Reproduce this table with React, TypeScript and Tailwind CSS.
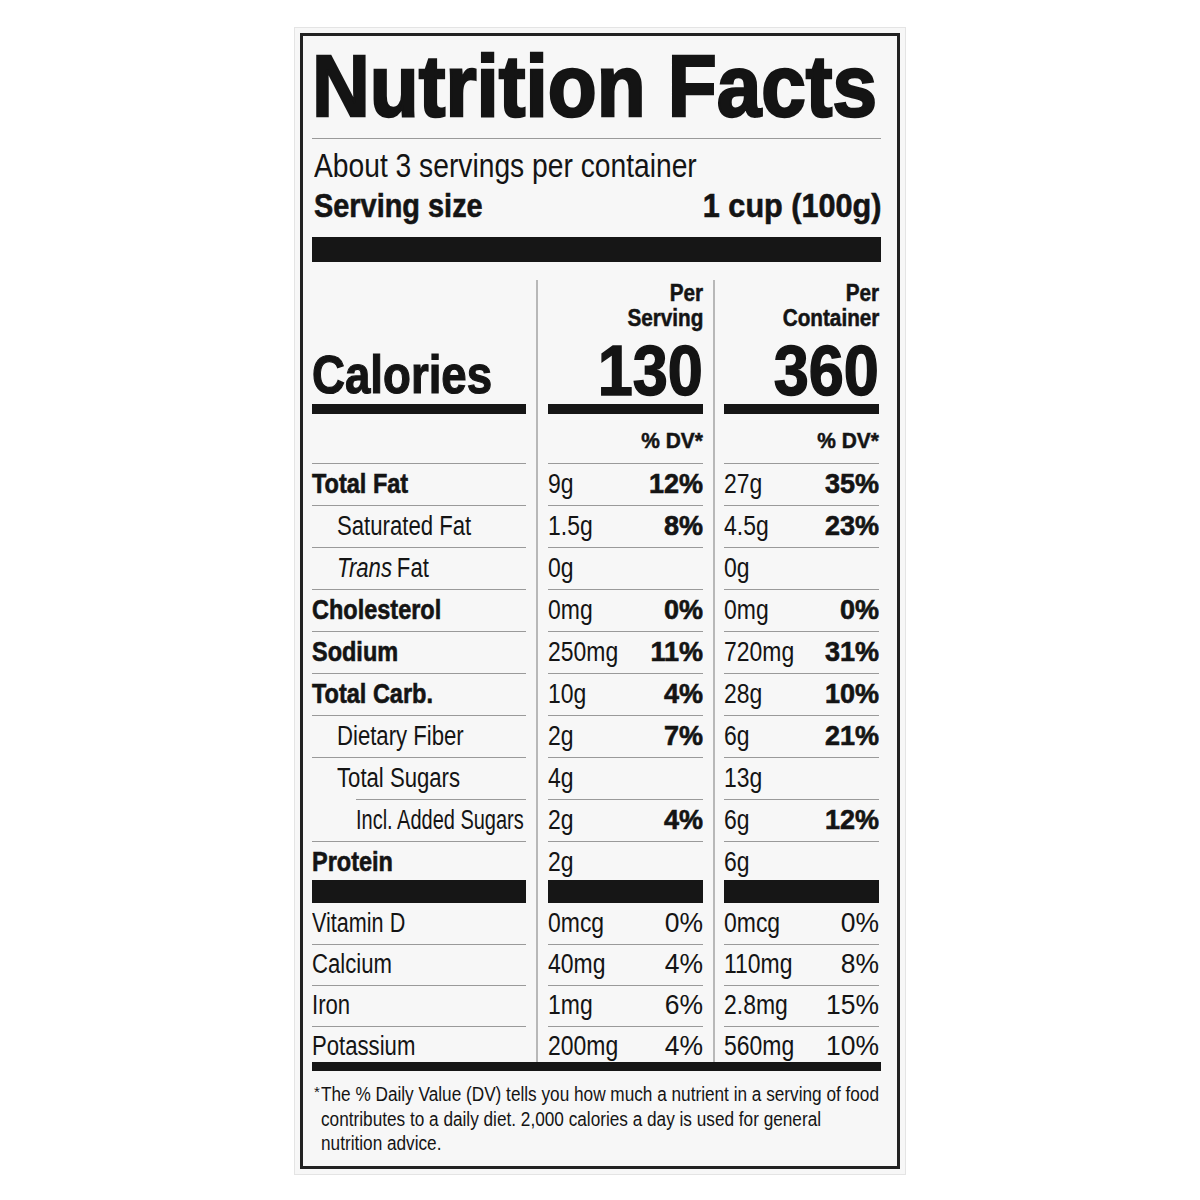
import type { ReactNode } from "react";
import clsx from "clsx";

type Nutrient = {
  label: string;
  bold?: boolean;
  indent?: 0 | 1 | 2;
  italicPrefix?: string;
  serving: [string, string];
  container: [string, string];
  lineIndent?: boolean;
  last?: boolean;
  sx?: string;
};

const MACROS: Nutrient[] = [
  { label: "Total Fat", bold: true, serving: ["9g", "12%"], container: ["27g", "35%"] },
  { label: "Saturated Fat", indent: 1, serving: ["1.5g", "8%"], container: ["4.5g", "23%"] },
  { label: "Fat", italicPrefix: "Trans", indent: 1, serving: ["0g", ""], container: ["0g", ""] },
  { label: "Cholesterol", bold: true, serving: ["0mg", "0%"], container: ["0mg", "0%"] },
  { label: "Sodium", bold: true, serving: ["250mg", "11%"], container: ["720mg", "31%"] },
  { label: "Total Carb.", bold: true, serving: ["10g", "4%"], container: ["28g", "10%"] },
  { label: "Dietary Fiber", indent: 1, serving: ["2g", "7%"], container: ["6g", "21%"] },
  { label: "Total Sugars", indent: 1, serving: ["4g", ""], container: ["13g", ""], lineIndent: true },
  {
    label: "Incl. Added Sugars",
    indent: 2,
    serving: ["2g", "4%"],
    container: ["6g", "12%"],
    sx: "scale-x-[0.74]",
  },
  { label: "Protein", bold: true, serving: ["2g", ""], container: ["6g", ""], last: true },
];

const MINERALS: Nutrient[] = [
  { label: "Vitamin D", serving: ["0mcg", "0%"], container: ["0mcg", "0%"], sx: "scale-x-[0.8]" },
  { label: "Calcium", serving: ["40mg", "4%"], container: ["110mg", "8%"] },
  { label: "Iron", serving: ["1mg", "6%"], container: ["2.8mg", "15%"] },
  { label: "Potassium", serving: ["200mg", "4%"], container: ["560mg", "10%"], last: true },
];

// condensed text: Liberation Sans squeezed to a Helvetica Condensed width
function Sx({ children, className }: { children: ReactNode; className?: string }) {
  return <span className={clsx("inline-block whitespace-nowrap", className)}>{children}</span>;
}

const rowHeight = (n: Nutrient, minerals?: boolean) =>
  minerals ? (n.last ? "h-[36px]" : "h-[41px]") : n.last ? "h-[38px]" : "h-[42px]";

function LabelRow({ n, minerals }: { n: Nutrient; minerals?: boolean }) {
  return (
    <div className={clsx("flex flex-col", rowHeight(n, minerals))}>
      <div
        className={clsx(
          "flex-1 flex items-center text-[27px]",
          n.bold && "font-bold [-webkit-text-stroke:0.6px_#141414]",
          n.indent === 1 && "pl-[25px]",
          n.indent === 2 && "pl-[44px]"
        )}
      >
        <Sx
          className={clsx(
            "origin-left",
            n.sx ?? (n.bold ? "scale-x-[0.87]" : "scale-x-[0.82]")
          )}
        >
          {n.italicPrefix && <i className="mr-[6px]">{n.italicPrefix}</i>}
          {n.label}
        </Sx>
      </div>
      {!n.last && <div className={clsx("h-px bg-[#9a9a9a]", n.lineIndent && "ml-[44px]")} />}
    </div>
  );
}

function ValueRow({
  n,
  pair,
  minerals,
}: {
  n: Nutrient;
  pair: [string, string];
  minerals?: boolean;
}) {
  return (
    <div className={clsx("flex flex-col", rowHeight(n, minerals))}>
      <div className="flex-1 flex items-center justify-between text-[27px]">
        <Sx className="origin-left scale-x-[0.85]">{pair[0]}</Sx>
        <Sx
          className={clsx(
            "origin-right",
            minerals ? "scale-x-[0.98]" : "font-bold scale-x-[1] [-webkit-text-stroke:0.6px_#141414]"
          )}
        >
          {pair[1]}
        </Sx>
      </div>
      {!n.last && <div className="h-px bg-[#9a9a9a]" />}
    </div>
  );
}

function ValueColumn({
  top,
  amount,
  pick,
  className,
}: {
  top: string;
  amount: string;
  pick: (n: Nutrient) => [string, string];
  className: string;
}) {
  return (
    <div className={clsx("border-l-2 border-[#b8b8b8]", className)}>
      <div className="w-[155px] flex flex-col">
        <div className="h-[124px] flex flex-col justify-between items-end pt-[1px] pb-[3px]">
          <div className="flex flex-col items-end text-[23px] leading-[25px] font-bold [-webkit-text-stroke:0.5px_#141414]">
            <Sx className="origin-right scale-x-[0.9]">Per</Sx>
            <Sx className="origin-right scale-x-[0.9]">{top}</Sx>
          </div>
          <Sx className="origin-right scale-x-[0.9] text-[70px] leading-[60px] font-bold [-webkit-text-stroke:1.5px_#141414]">
            {amount}
          </Sx>
        </div>
        <div className="h-[10px] bg-[#161616]" />
        <div className="h-[50px] pt-[14px] flex flex-col">
          <div className="flex-1 flex justify-end text-[22px] leading-[26px] font-bold [-webkit-text-stroke:0.5px_#141414]">
            <Sx className="origin-right scale-x-[0.95]">% DV*</Sx>
          </div>
          <div className="h-px bg-[#9a9a9a]" />
        </div>
        {MACROS.map((n) => (
          <ValueRow key={n.label} n={n} pair={pick(n)} />
        ))}
        <div className="h-[23px] bg-[#161616]" />
        {MINERALS.map((n) => (
          <ValueRow key={n.label} n={n} pair={pick(n)} minerals />
        ))}
      </div>
    </div>
  );
}

export default function App() {
  return (
    <div className="min-h-screen bg-white pt-[27px] pb-[26px] font-['Liberation_Sans',Arial,sans-serif] text-[#141414]">
      <div className="mx-auto w-[612px] bg-[#f7f7f7] border border-[#e4e4e4] p-[5px]">
        <div className="border-[3px] border-[#222] pl-[9px] pr-[16px] pt-[5px] pb-[10px]">
          <h1 className="text-[88px] leading-[90px] font-bold">
            <Sx className="origin-left scale-x-[0.91] [-webkit-text-stroke:2.5px_#141414]">
              Nutrition Facts
            </Sx>
          </h1>
          <div className="mt-[7px] h-px bg-[#9a9a9a]" />
          <div className="mt-[6px] text-[34px] leading-[40px] pl-[2px]">
            <div>
              <Sx className="origin-left scale-x-[0.83]">About 3 servings per container</Sx>
            </div>
            <div className="flex justify-between font-bold [-webkit-text-stroke:0.6px_#141414]">
              <Sx className="origin-left scale-x-[0.85]">Serving size</Sx>
              <Sx className="origin-right scale-x-[0.9]">1 cup (100g)</Sx>
            </div>
          </div>
          <div className="mt-[12px] h-[25px] bg-[#161616]" />

          <div className="mt-[18px] flex">
            <div className="w-[214px] flex flex-col">
              <div className="h-[124px] flex items-end pb-[3px]">
                <Sx className="origin-left scale-x-[0.845] text-[54px] leading-[54px] font-bold [-webkit-text-stroke:1.2px_#141414]">
                  Calories
                </Sx>
              </div>
              <div className="h-[10px] bg-[#161616]" />
              <div className="h-[50px] flex flex-col">
                <div className="flex-1" />
                <div className="h-px bg-[#9a9a9a]" />
              </div>
              {MACROS.map((n) => (
                <LabelRow key={n.label} n={n} />
              ))}
              <div className="h-[23px] bg-[#161616]" />
              {MINERALS.map((n) => (
                <LabelRow key={n.label} n={n} minerals />
              ))}
            </div>
            <ValueColumn
              top="Serving"
              amount="130"
              pick={(n) => n.serving}
              className="ml-[10px] pl-[10px]"
            />
            <ValueColumn
              top="Container"
              amount="360"
              pick={(n) => n.container}
              className="ml-[10px] pl-[9px]"
            />
          </div>
          <div className="h-[9px] bg-[#161616]" />

          <div className="mt-[11px] flex text-[20px] leading-[24.5px] pl-[2px]">
            <span className="text-[15px] leading-[20px]">*</span>
            <div className="flex flex-col pl-[1px]">
              <Sx className="origin-left scale-x-[0.86]">
                The % Daily Value (DV) tells you how much a nutrient in a serving of food
              </Sx>
              <Sx className="origin-left scale-x-[0.86]">
                contributes to a daily diet. 2,000 calories a day is used for general
              </Sx>
              <Sx className="origin-left scale-x-[0.86]">nutrition advice.</Sx>
            </div>
          </div>
        </div>
      </div>
    </div>
  );
}
